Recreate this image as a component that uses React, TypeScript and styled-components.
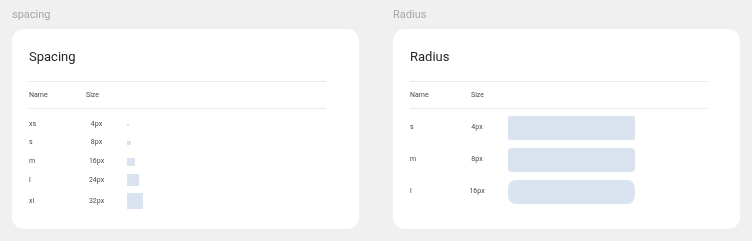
import React from 'react';
import styled, { createGlobalStyle } from 'styled-components';

const GlobalStyle = createGlobalStyle`
  html, body {
    margin: 0;
    padding: 0;
    background-color: #f0f0f0;
    font-family: Roboto, "Noto Sans", Arial, sans-serif;
    -webkit-font-smoothing: antialiased;
  }
`;

interface TokenRow {
  name: string;
  size: number;
}

const spacingTokens: TokenRow[] = [
  { name: 'xs', size: 4 },
  { name: 's', size: 8 },
  { name: 'm', size: 16 },
  { name: 'l', size: 24 },
  { name: 'xl', size: 32 },
];

const radiusTokens: TokenRow[] = [
  { name: 's', size: 4 },
  { name: 'm', size: 8 },
  { name: 'l', size: 16 },
];

const App: React.FC = () => {
  return (
    <>
      <GlobalStyle />
      <Page>
        <Column>
          <SectionLabel>spacing</SectionLabel>
          <Card>
            <Title>Spacing</Title>
            <Table $nameCol={57} $sizeCol={21} $sizeGap={20}>
              <HeaderRow>
                <HeaderCell>Name</HeaderCell>
                <HeaderCell>Size</HeaderCell>
                <span />
              </HeaderRow>
              <Body $offset={6.25}>
                {spacingTokens.map((token) => (
                  <Row key={token.name} $pad={3.5}>
                    <Cell>{token.name}</Cell>
                    <SizeCell>{token.size}px</SizeCell>
                    <SpaceSwatch $size={token.size / 2} />
                  </Row>
                ))}
              </Body>
            </Table>
          </Card>
        </Column>

        <Column>
          <SectionLabel>Radius</SectionLabel>
          <Card>
            <Title>Radius</Title>
            <Table $nameCol={61} $sizeCol={12} $sizeGap={25}>
              <HeaderRow>
                <HeaderCell>Name</HeaderCell>
                <HeaderCell>Size</HeaderCell>
                <span />
              </HeaderRow>
              <Body $offset={3}>
                {radiusTokens.map((token) => (
                  <Row key={token.name} $pad={4}>
                    <Cell>{token.name}</Cell>
                    <SizeCell>{token.size}px</SizeCell>
                    <RadiusSwatch $radius={token.size / 2} />
                  </Row>
                ))}
              </Body>
            </Table>
          </Card>
        </Column>
      </Page>
    </>
  );
};

const Page = styled.div`
  display: grid;
  grid-template-columns: 347px 347px;
  column-gap: 34px;
  padding: 8px 12px 12px;
`;

const Column = styled.div`
  display: flex;
  flex-direction: column;
`;

const SectionLabel = styled.div`
  font-size: 11px;
  line-height: 14px;
  color: #a6a6a6;
  margin-bottom: 7px;
  will-change: transform;
`;

const Card = styled.div`
  flex: 1;
  background-color: #ffffff;
  border-radius: 12px;
  padding: 20px 33px 16px 17px;
`;

const Title = styled.h2`
  margin: 0 0 16px;
  font-size: 13px;
  line-height: 16px;
  font-weight: 400;
  color: #262626;
  will-change: transform;
`;

const Table = styled.div<{ $nameCol: number; $sizeCol: number; $sizeGap: number }>`
  --name-col: ${({ $nameCol }) => $nameCol}px;
  --size-col: ${({ $sizeCol }) => $sizeCol}px;
  --size-gap: ${({ $sizeGap }) => $sizeGap}px;
  border-top: 1px solid #e9e9e9;
  font-size: 7px;
  color: #4a4a4a;
  will-change: transform;
`;

const HeaderRow = styled.div`
  display: grid;
  grid-template-columns: var(--name-col) calc(var(--size-col) + var(--size-gap)) 1fr;
  align-items: center;
  height: 26px;
  border-bottom: 1px solid #e9e9e9;
`;

const HeaderCell = styled.span`
  color: #4a4a4a;
`;

const Body = styled.div<{ $offset: number }>`
  padding-top: ${({ $offset }) => $offset}px;
`;

const Row = styled.div<{ $pad: number }>`
  display: grid;
  grid-template-columns: var(--name-col) var(--size-col) 1fr;
  align-items: center;
  padding: ${({ $pad }) => $pad}px 0;
  line-height: 11.5px;
`;

const Cell = styled.span`
  color: #4a4a4a;
`;

const SizeCell = styled.span`
  display: flex;
  justify-content: center;
  width: var(--size-col);
  white-space: nowrap;
  color: #4a4a4a;
`;

const SpaceSwatch = styled.div<{ $size: number }>`
  margin-left: var(--size-gap);
  width: ${({ $size }) => $size}px;
  height: ${({ $size }) => $size}px;
  background-color: #d9e4f0;
`;

const RadiusSwatch = styled.div<{ $radius: number }>`
  margin-left: var(--size-gap);
  width: 127px;
  height: 24px;
  border-radius: ${({ $radius }) => $radius}px;
  background-color: #d9e4f0;
`;

export default App;
